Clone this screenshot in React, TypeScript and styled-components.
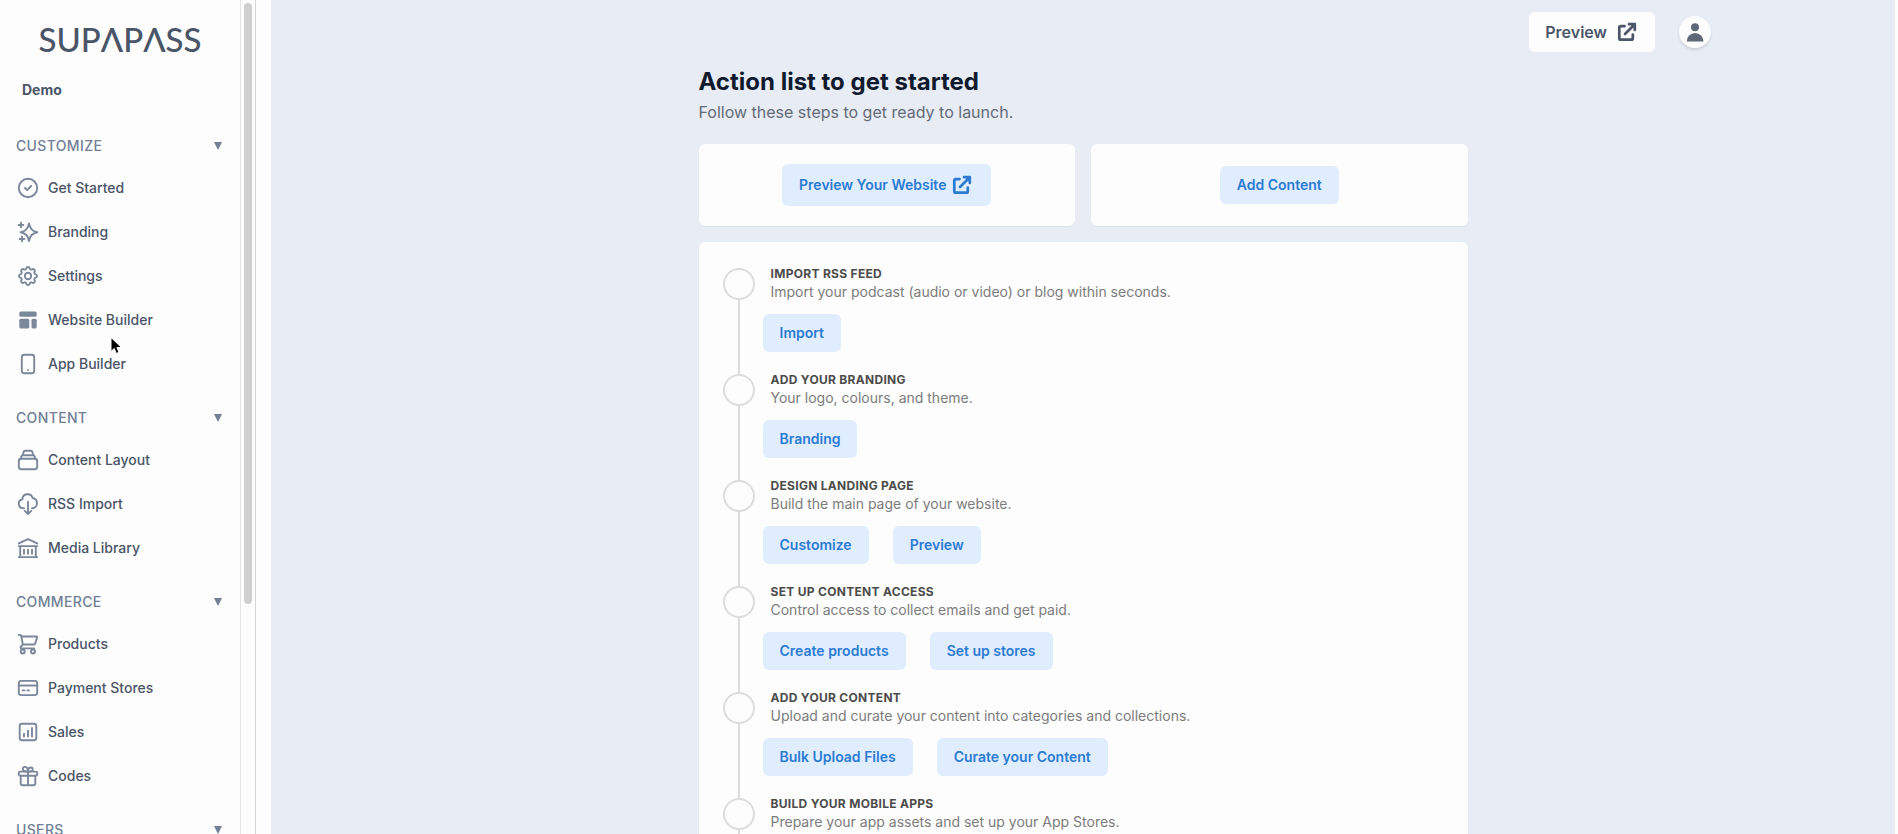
import React from "react";
import styled, { createGlobalStyle } from "styled-components";

const GlobalStyle = createGlobalStyle`
  *, *::before, *::after { box-sizing: border-box; }
  body {
    margin: 0;
    background: #fdfdfd;
    font-family: Inter, "Liberation Sans", sans-serif;
    font-size: 14px;
    line-height: 20px;
    color: #4a5568;
  }
  h1, h2, h3, p, ul, ol { margin: 0; padding: 0; }
  ul, ol { list-style: none; }
  a { color: inherit; text-decoration: none; }
  button { font: inherit; color: inherit; cursor: pointer; }
`;

/* ---------- shell ---------- */

const Shell = styled.div`
  display: flex;
  height: 100vh;
  padding-right: 3px;
  overflow: hidden;
`;

const Sidebar = styled.aside`
  flex: 0 0 241px;
  border-right: 1px solid #e4e4e4;
  overflow-y: auto;
  scrollbar-width: none;
`;

const ScrollRail = styled.div`
  flex: 0 0 15px;
  padding: 3px 3px 0;
  border-right: 1px solid #d4d4d4;
`;

const ScrollThumb = styled.div`
  width: 8px;
  height: calc(72% + 3px);
  border-radius: 4px;
  background: #cfcfcf;
`;

const Main = styled.main`
  flex: 1;
  min-width: 0;
  margin-left: 15px;
  background: #e8ecf5;
  overflow-y: auto;
  scrollbar-width: none;
`;

/* ---------- sidebar ---------- */

const Brand = styled.a`
  display: block;
  padding-top: 19px;
  font-family: Lato, Inter, sans-serif;
  font-size: 33px;
  font-weight: 500;
  line-height: 40px;
  text-align: center;
`;

const AccountName = styled.p`
  padding: 21px 22px 0;
  font-weight: 700;
`;

const Nav = styled.nav`
  display: flex;
  flex-direction: column;
  gap: 12px;
  padding: 26px 16px 0;
`;

const SectionToggle = styled.button`
  display: flex;
  align-items: center;
  justify-content: space-between;
  width: 100%;
  height: 40px;
  padding: 0 2px 0 0;
  border: 0;
  background: none;
  color: #718096;
  font-weight: 500;
  letter-spacing: 0.025em;
`;

const NavLink = styled.a`
  display: flex;
  align-items: center;
  gap: 8px;
  height: 44px;
  font-weight: 500;
`;

const LineIcon = styled.svg`
  width: 24px;
  height: 24px;
  flex: none;
  fill: none;
  stroke: #7b879b;
  stroke-width: 1.9;
  stroke-linecap: round;
  stroke-linejoin: round;
`;

/* ---------- main area ---------- */

const TopBar = styled.header`
  display: flex;
  align-items: center;
  justify-content: flex-end;
  gap: 24px;
  max-width: 1280px;
  margin: 0 auto;
  padding: 12px 12px 0;
`;

const PreviewButton = styled.button`
  display: flex;
  align-items: center;
  gap: 8px;
  height: 40px;
  padding: 0 16px;
  border: 0;
  border-radius: 6px;
  background: #fdfdfd;
  font-size: 16px;
  font-weight: 600;
`;

const Avatar = styled.button`
  width: 32px;
  height: 32px;
  padding: 0;
  border: 0;
  border-radius: 50%;
  background: #fdfdfd;
  box-shadow: 0 2px 3px rgba(0, 0, 0, 0.12);
`;

const Content = styled.div`
  max-width: 769px;
  margin: 0 auto;
  padding: 14px 0 24px;
`;

const PageTitle = styled.h1`
  font-size: 24px;
  line-height: 32px;
  font-weight: 700;
  color: #0f1a2e;
`;

const PageIntro = styled.p`
  margin-bottom: 20px;
  padding-top: 2px;
  font-size: 16px;
  line-height: 24px;
  color: #646b78;
`;

const CardRow = styled.div`
  display: grid;
  grid-template-columns: 1fr 1fr;
  gap: 16px;
  margin-bottom: 16px;
`;

const Card = styled.section`
  border-radius: 6px;
  background: #fdfdfd;
  box-shadow: 0 1px 1px rgba(0, 0, 0, 0.04);
`;

const ActionCard = styled(Card)`
  display: flex;
  align-items: center;
  justify-content: center;
  padding: 20px;
`;

const SoftButton = styled.button`
  display: inline-flex;
  align-items: center;
  gap: 4px;
  padding: 8px 16px;
  border: 1px solid transparent;
  border-radius: 6px;
  background: #dfedff;
  color: #2b7bd3;
  font-weight: 600;
  white-space: nowrap;
`;

const StepsCard = styled(Card)`
  padding: 24px;
`;

const Step = styled.li`
  display: flex;
  gap: 16px;
`;

const Marker = styled.div`
  display: flex;
  flex-direction: column;
  align-items: center;
  flex: 0 0 32px;

  &::before {
    content: "";
    width: 2px;
    height: 2px;
    background: #dcdcdc;
  }
  ${Step}:first-child &::before { background: none; }

  &::after {
    content: "";
    flex: 1;
    width: 2px;
    background: #dcdcdc;
  }
`;

const Circle = styled.span`
  width: 32px;
  height: 32px;
  border: 2px solid #dcdcdc;
  border-radius: 50%;
`;

const StepTitle = styled.h2`
  font-size: 12px;
  line-height: 16px;
  font-weight: 700;
  letter-spacing: 0.025em;
  text-transform: uppercase;
  color: #4c4c4c;
`;

const StepText = styled.p`
  color: #7c7c7c;
`;

const StepActions = styled.div`
  display: flex;
  gap: 24px;
  margin-left: -8px;
  padding: 12px 0 20px;
`;

const Pointer = styled.svg`
  position: absolute;
  left: 110px;
  top: 336px;
  width: 14px;
  height: 20px;
  pointer-events: none;
`;

/* ---------- icons ---------- */

const ExternalIcon = () => (
  <svg width="24" height="24" viewBox="0 0 24 24" fill="none" stroke="currentColor" strokeWidth="2.7" strokeLinecap="round" strokeLinejoin="round" aria-hidden="true">
    <path d="M9.500 6.200H5.800a1.500 1.500 0 0 0-1.500 1.500v10.500a1.500 1.500 0 0 0 1.500 1.500h10.500a1.500 1.500 0 0 0 1.500-1.500V14.500M14 4.200h5.800m0 0v5.800m0-5.800L10 14" />
  </svg>
);

const CaretIcon = () => (
  <svg width="8" height="8" viewBox="0 0 8 8" fill="currentColor" aria-hidden="true">
    <path d="M0 0h8L4 8z" />
  </svg>
);

const UserIcon = () => (
  <svg width="32" height="32" viewBox="0 0 32 32" fill="#5f6878" aria-hidden="true">
    <circle cx="16" cy="11.3" r="4" />
    <path d="M7.7 25.6a8.4 8.6 0 0 1 16.8 0z" />
  </svg>
);

const icons: Record<string, React.ReactNode> = {
  check: (
    <>
      <circle cx="12" cy="12" r="9.2" />
      <path d="M9 12l2.2 2.2 4-4.2" />
    </>
  ),
  sparkle: (
    <>
      <path d="M13 3.4c.8 5 3.4 8 8.3 8.9-4.9.9-7.5 3.8-8.3 8.8-.8-5-3.400-7.900-8.300-8.800 4.900-.9 7.500-3.900 8.300-8.900z" />
      <path d="M5 2.700v4.600M2.700 5h4.600M6 16.700v4.600M3.700 19h4.600" />
    </>
  ),
  cog: (
    <>
      <path d="M10.325 4.317c.426-1.756 2.924-1.756 3.350 0a1.724 1.724 0 0 0 2.573 1.066c1.543-.940 3.310.826 2.370 2.370a1.724 1.724 0 0 0 1.065 2.572c1.756.426 1.756 2.924 0 3.350a1.724 1.724 0 0 0-1.066 2.573c.940 1.543-.826 3.310-2.370 2.370a1.724 1.724 0 0 0-2.572 1.065c-.426 1.756-2.924 1.756-3.350 0a1.724 1.724 0 0 0-2.573-1.066c-1.543.940-3.310-.826-2.370-2.370a1.724 1.724 0 0 0-1.065-2.572c-1.756-.426-1.756-2.924 0-3.350a1.724 1.724 0 0 0 1.066-2.573c-.940-1.543.826-3.310 2.370-2.370.996.608 2.296.070 2.572-1.065z" />
      <circle cx="12" cy="12" r="3.200" />
    </>
  ),
  layout: (
    <g fill="#7b879b" stroke="none">
      <rect x="3.300" y="3.600" width="17.400" height="5.200" rx="1.500" />
      <rect x="3.300" y="10.800" width="10" height="9.600" rx="1.500" />
      <rect x="15.500" y="10.800" width="5.200" height="9.600" rx="1.500" />
    </g>
  ),
  phone: (
    <>
      <rect x="5.800" y="2.800" width="12.400" height="18.400" rx="2.500" />
      <path d="M12 18h.01" />
    </>
  ),
  stack: (
    <>
      <rect x="2.800" y="10.700" width="18.400" height="10.600" rx="2.500" />
      <path d="M4.700 10.700l.7-2.300a1.600 1.600 0 0 1 1.500-1.100h10.200a1.600 1.600 0 0 1 1.500 1.100l.7 2.300M6.700 7.300l.9-3.400a1.500 1.500 0 0 1 1.400-1.100h6a1.500 1.500 0 0 1 1.400 1.100l.9 3.400" />
    </>
  ),
  cloud: (
    <path d="M8 16.200h-.9a4.500 4.500 0 0 1-.7-8.900 5.200 5.200 0 0 1 10.200-1.300 5.200 5.200 0 0 1 .3 10.200H16M12 9.800v12.200M8.800 18.900l3.200 3.200 3.200-3.200" />
  ),
  library: (
    <path d="M2.800 7.400L12 3.100l9.200 4.300M2.800 10.100h18.400M4.200 10.100v10.900M19.800 10.100v10.900M2.800 21.100h18.400M8 13.700v4M12 13.700v4M16 13.700v4" />
  ),
  cart: (
    <>
      <path d="M2.700 2.900h1.500a1 1 0 0 1 1 .8l1.600 8.800h11.300a1 1 0 0 0 1-.7l2.100-6.500a.6.6 0 0 0-.6-.8H5.500M6.800 12.500l-1.900 2a1.100 1.100 0 0 0 .8 1.900h12.500" />
      <circle cx="6.700" cy="19.500" r="2" />
      <circle cx="17" cy="19.500" r="2" />
    </>
  ),
  card: (
    <>
      <rect x="2.800" y="4.900" width="18.400" height="14.200" rx="2.500" />
      <path d="M2.800 9.500h18.400M6.700 14.400h1.600M11.300 14.400h1.600" />
    </>
  ),
  chart: (
    <>
      <rect x="3.700" y="3.700" width="16.600" height="16.600" rx="2.200" />
      <path d="M8 13.700v2.800M12 10.800v5.700M16 7.900v8.600" />
    </>
  ),
  gift: (
    <>
      <rect x="2.700" y="7.600" width="18.600" height="4.200" rx="1.500" />
      <path d="M4.700 11.800v7.500a2 2 0 0 0 2 2h10.600a2 2 0 0 0 2-2v-7.500M12 7.600v13.700M12 7.600c-3.500 0-5.200-.7-5.200-2.500 0-1.400 1-2.200 2.200-2.200 2 0 3 2.100 3 4.700zM12 7.600c3.500 0 4.700-.8 4.700-2.200 0-1.200-.9-1.900-1.900-1.900-1.900 0-2.800 1.600-2.800 4.100z" />
    </>
  ),
};

/* ---------- data ---------- */

const sections = [
  {
    title: "CUSTOMIZE",
    items: [
      ["check", "Get Started"],
      ["sparkle", "Branding"],
      ["cog", "Settings"],
      ["layout", "Website Builder"],
      ["phone", "App Builder"],
    ],
  },
  {
    title: "CONTENT",
    items: [
      ["stack", "Content Layout"],
      ["cloud", "RSS Import"],
      ["library", "Media Library"],
    ],
  },
  {
    title: "COMMERCE",
    items: [
      ["cart", "Products"],
      ["card", "Payment Stores"],
      ["chart", "Sales"],
      ["gift", "Codes"],
    ],
  },
  { title: "USERS", items: [] },
];

const steps = [
  { title: "Import RSS feed", text: "Import your podcast (audio or video) or blog within seconds.", actions: ["Import"] },
  { title: "Add your branding", text: "Your logo, colours, and theme.", actions: ["Branding"] },
  { title: "Design landing page", text: "Build the main page of your website.", actions: ["Customize", "Preview"] },
  { title: "Set up content access", text: "Control access to collect emails and get paid.", actions: ["Create products", "Set up stores"] },
  { title: "Add your content", text: "Upload and curate your content into categories and collections.", actions: ["Bulk Upload Files", "Curate your Content"] },
  { title: "Build your mobile apps", text: "Prepare your app assets and set up your App Stores.", actions: [] },
];

export default function App() {
  return (
    <>
      <GlobalStyle />
      <Shell>
        <Sidebar>
          <Brand href="#" aria-label="Supapass">SUPΛPΛSS</Brand>
          <AccountName>Demo</AccountName>
          <Nav>
            {sections.map((section) => (
              <div key={section.title}>
                <SectionToggle type="button">
                  {section.title}
                  <CaretIcon />
                </SectionToggle>
                <ul>
                  {section.items.map(([icon, label]) => (
                    <li key={label}>
                      <NavLink href="#">
                        <LineIcon viewBox="0 0 24 24" aria-hidden="true">{icons[icon]}</LineIcon>
                        {label}
                      </NavLink>
                    </li>
                  ))}
                </ul>
              </div>
            ))}
          </Nav>
        </Sidebar>
        <ScrollRail>
          <ScrollThumb />
        </ScrollRail>
        <Main>
          <TopBar>
            <PreviewButton type="button">
              Preview
              <ExternalIcon />
            </PreviewButton>
            <Avatar type="button" aria-label="Account">
              <UserIcon />
            </Avatar>
          </TopBar>
          <Content>
            <PageTitle>Action list to get started</PageTitle>
            <PageIntro>Follow these steps to get ready to launch.</PageIntro>
            <CardRow>
              <ActionCard>
                <SoftButton type="button">
                  Preview Your Website
                  <ExternalIcon />
                </SoftButton>
              </ActionCard>
              <ActionCard>
                <SoftButton type="button">Add Content</SoftButton>
              </ActionCard>
            </CardRow>
            <StepsCard>
              <ol>
                {steps.map((step) => (
                  <Step key={step.title}>
                    <Marker>
                      <Circle />
                    </Marker>
                    <div>
                      <StepTitle>{step.title}</StepTitle>
                      <StepText>{step.text}</StepText>
                      <StepActions>
                        {step.actions.map((action) => (
                          <SoftButton key={action} type="button">{action}</SoftButton>
                        ))}
                      </StepActions>
                    </div>
                  </Step>
                ))}
              </ol>
            </StepsCard>
          </Content>
        </Main>
      </Shell>
      <Pointer viewBox="0 0 14 20" aria-hidden="true">
        <path d="M1 1.500v14l3.200-3 2.200 5 2.600-1.200-2.100-4.800h4.600z" fill="#000" stroke="#fff" strokeWidth="1" />
      </Pointer>
    </>
  );
}
